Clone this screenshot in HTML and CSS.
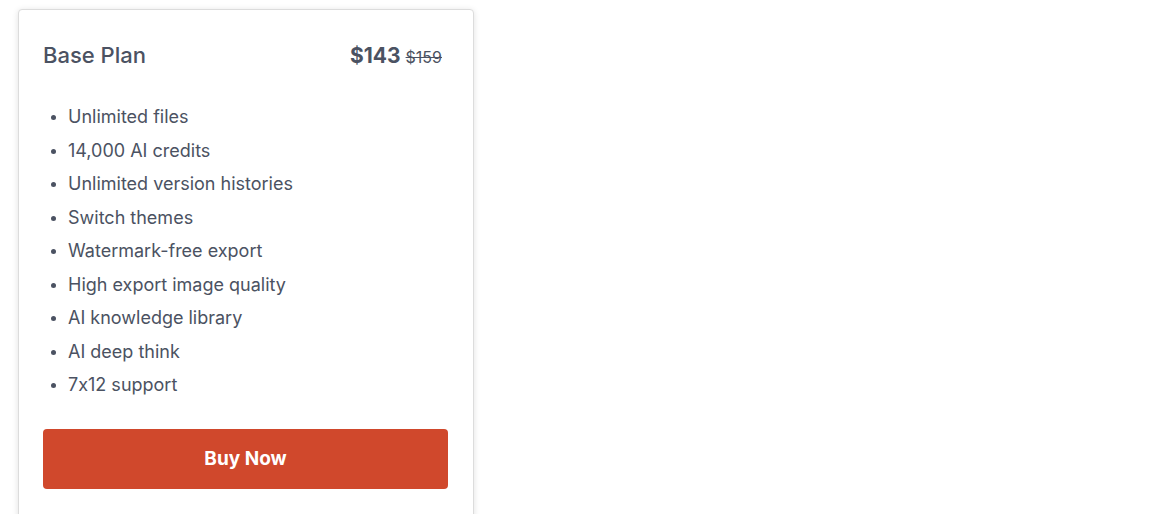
FILE: index.html
```html
<!DOCTYPE html>
<html lang="en">
<head>
    <meta charset="UTF-8">
    <meta name="viewport" content="width=device-width, initial-scale=1.0">
    <title>Pricing</title>
    <link rel="stylesheet" href="styles.css">
</head>
<body>
    <div class="plan-card">
        <!-- Plan name and price -->
        <div class="plan-header">
            <h2 class="plan-name">Base Plan</h2>
            <div class="plan-price">
                <span class="price-now">$143</span>
                <span class="price-old">$159</span>
            </div>
        </div>

        <!-- Features -->
        <ul class="plan-features">
            <li>Unlimited files</li>
            <li>14,000 AI credits</li>
            <li>Unlimited version histories</li>
            <li>Switch themes</li>
            <li>Watermark-free export</li>
            <li>High export image quality</li>
            <li>AI knowledge library</li>
            <li>AI deep think</li>
            <li>7x12 support</li>
        </ul>

        <button class="buy-btn">Buy Now</button>
    </div>
</body>
</html>
```

FILE: styles.css
```css
body {
    font-family: 'Inter', 'Open Sans', sans-serif;
    font-feature-settings: "calt" 0;
    margin: 0;
    padding: 9px 0 0 18px;
    background-color: #fff;
    color: #4b5262;
}
.plan-card {
    width: 405px;
    padding: 25px 25px 40px 24px;
    border: 1px solid #dcdcdc;
    border-radius: 4px;
    box-shadow: 0 1px 6px rgba(0, 0, 0, 0.12);
    background-color: #fff;
}
.plan-header {
    display: flex;
    justify-content: space-between;
    align-items: center;
    padding-right: 6px;
    height: 40px;
}
.plan-name {
    margin: 0;
    font-size: 22px;
    font-weight: 500;
}
.plan-price {
    display: flex;
    align-items: baseline;
    gap: 5px;
}
.price-now {
    font-size: 21px;
    font-weight: 700;
}
.price-old {
    font-size: 16px;
    text-decoration: line-through;
}
.plan-features {
    margin: 25px 0 0;
    padding-left: 25px;
    list-style: disc;
}
.plan-features li {
    font-size: 18px;
    line-height: 33.5px;
}
.plan-features li::marker {
    font-size: 15px;
}
.buy-btn {
    display: block;
    width: 100%;
    height: 60px;
    margin-top: 27px;
    border: none;
    border-radius: 4px;
    background-color: #d0482c;
    color: #fff;
    font-family: inherit;
    font-size: 19px;
    font-weight: 700;
    cursor: pointer;
}
```
